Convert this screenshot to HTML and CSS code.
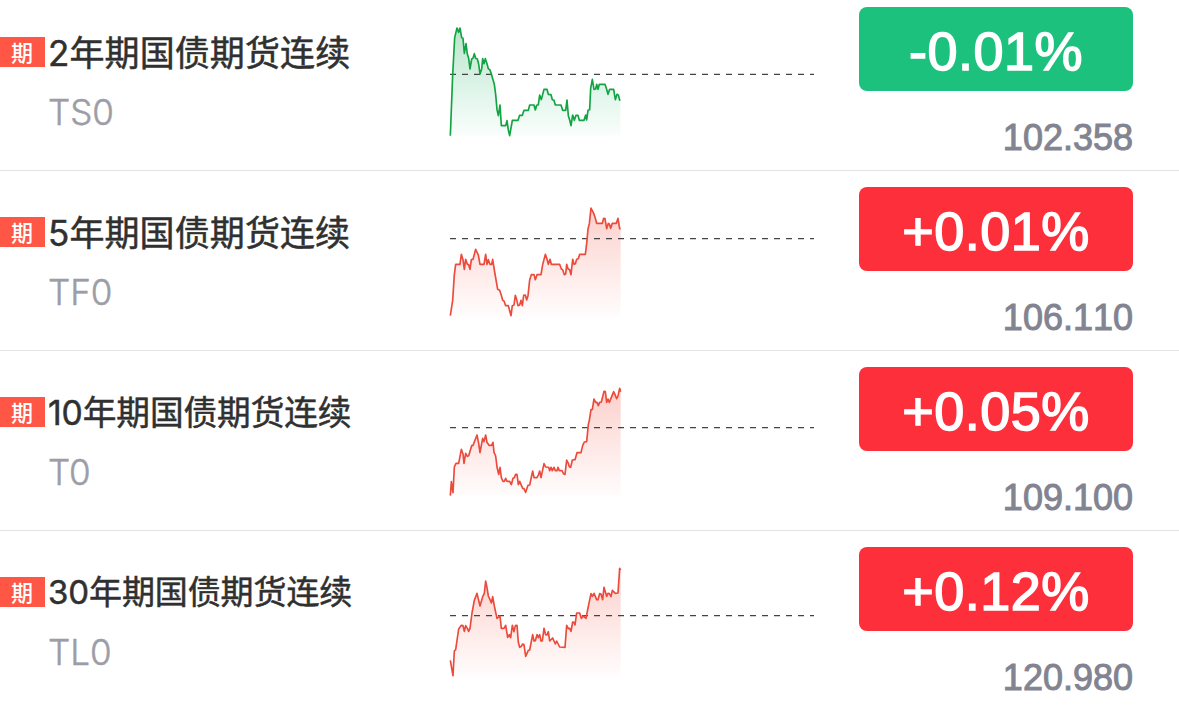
FILE: index.html
```
<!DOCTYPE html>
<html lang="zh-CN">
<head>
<meta charset="utf-8">
<title>国债期货</title>
<link rel="stylesheet" href="styles.css">
</head>
<body>
<svg class="defs" width="0" height="0">
  <defs>
    <linearGradient id="fall" gradientUnits="userSpaceOnUse" x1="0" y1="38" x2="0" y2="365"><stop offset="0" stop-color="#18a548" stop-opacity=".3"/><stop offset="1" stop-color="#18c070" stop-opacity=".02"/></linearGradient>
    <linearGradient id="rise" gradientUnits="userSpaceOnUse" x1="0" y1="38" x2="0" y2="370"><stop offset="0" stop-color="#f04a3a" stop-opacity=".27"/><stop offset="1" stop-color="#f85a4a" stop-opacity=".01"/></linearGradient>
  </defs>
</svg>
<main class="list">
  <section class="row">
    <span class="tag">期</span>
    <div class="info"><div class="name s35">2年期国债期货连续</div><div class="code">TS0</div></div>
    <svg class="chart down" viewBox="0 0 1140 390">
      <path class="area" d="M31 362L38 180L44 68L51 39L56 52L60 39L65 68L69 70L73 115L78 86L82 117L86 130L90 162L95 132L99 130L103 116L107 130L112 132L116 147L120 177L125 162L128 131L132 146L136 131L141 146L145 161L150 165L154 177L163 208L167 238L171 284L175 302L180 270L184 332L197 332L201 317L205 345L209 362L217 316L234 316L239 301L247 301L252 286L265 286L269 270L282 270L286 285L290 271L295 269L299 240L304 254L312 223L321 223L325 238L333 239L337 254L342 256L346 270L363 270L368 286L377 286L381 255L385 302L389 315L393 332L398 300L403 316L408 301L414 301L418 316L432 316L437 300L440 315L444 286L449 284L452 220L457 193L462 223L467 222L470 208L474 223L478 208L495 208L500 223L504 238L509 223L521 223L526 254L531 238L535 240L539 255L541 257V362Z"/>
      <path class="avg" d="M30 178H1122"/>
      <path class="line" d="M31 362L38 180L44 68L51 39L56 52L60 39L65 68L69 70L73 115L78 86L82 117L86 130L90 162L95 132L99 130L103 116L107 130L112 132L116 147L120 177L125 162L128 131L132 146L136 131L141 146L145 161L150 165L154 177L163 208L167 238L171 284L175 302L180 270L184 332L197 332L201 317L205 345L209 362L217 316L234 316L239 301L247 301L252 286L265 286L269 270L282 270L286 285L290 271L295 269L299 240L304 254L312 223L321 223L325 238L333 239L337 254L342 256L346 270L363 270L368 286L377 286L381 255L385 302L389 315L393 332L398 300L403 316L408 301L414 301L418 316L432 316L437 300L440 315L444 286L449 284L452 220L457 193L462 223L467 222L470 208L474 223L478 208L495 208L500 223L504 238L509 223L521 223L526 254L531 238L535 240L539 255L541 257"/>
    </svg>
    <div class="quote"><div class="change down">-0.01%</div><div class="price">102.358</div></div>
  </section>
  <section class="row">
    <span class="tag">期</span>
    <div class="info"><div class="name s35">5年期国债期货连续</div><div class="code">TF0</div></div>
    <svg class="chart" viewBox="0 0 1140 390">
      <path class="area" d="M31 362L38 316L43 239L47 208L60 208L64 178L69 194L73 223L77 193L82 208L86 209L90 223L94 194L99 193L107 163L115 180L120 208L132 208L137 178L141 208L145 194L150 208L155 208L158 193L163 225L173 283L179 286L184 301L188 316L192 318L197 332L205 332L213 362L217 332L222 330L226 301L230 314L234 332L239 330L243 316L247 332L251 301L256 300L260 315L264 302L269 255L274 239L282 239L286 254L291 239L303 239L308 209L316 178L321 192L325 208L330 193L334 208L359 208L364 222L368 224L373 239L377 237L380 208L384 221L389 224L393 239L398 193L402 208L406 206L410 193L415 191L419 178L436 178L440 146L444 102L448 86L453 39L461 55L466 70L470 85L487 85L491 70L495 71L500 101L505 85L508 87L512 100L517 85L529 85L534 70L539 101L542 101V365H31Z"/>
      <path class="avg" d="M30 131H1122"/>
      <path class="line" d="M31 362L38 316L43 239L47 208L60 208L64 178L69 194L73 223L77 193L82 208L86 209L90 223L94 194L99 193L107 163L115 180L120 208L132 208L137 178L141 208L145 194L150 208L155 208L158 193L163 225L173 283L179 286L184 301L188 316L192 318L197 332L205 332L213 362L217 332L222 330L226 301L230 314L234 332L239 330L243 316L247 332L251 301L256 300L260 315L264 302L269 255L274 239L282 239L286 254L291 239L303 239L308 209L316 178L321 192L325 208L330 193L334 208L359 208L364 222L368 224L373 239L377 237L380 208L384 221L389 224L393 239L398 193L402 208L406 206L410 193L415 191L419 178L436 178L440 146L444 102L448 86L453 39L461 55L466 70L470 85L487 85L491 70L495 71L500 101L505 85L508 87L512 100L517 85L529 85L534 70L539 101L542 101"/>
    </svg>
    <div class="quote"><div class="change">+0.01%</div><div class="price">106.110</div></div>
  </section>
  <section class="row">
    <span class="tag">期</span>
    <div class="info"><div class="name s34">10年期国债期货连续</div><div class="code">T0</div></div>
    <svg class="chart" viewBox="0 0 1140 390">
      <path class="area" d="M31 362L34 320L39 353L43 276L48 265L56 265L64 223L69 237L72 265L77 235L82 244L86 242L95 212L99 211L111 180L116 205L120 233L128 190L132 200L137 180L141 202L147 211L155 211L159 202L162 232L167 243L171 276L176 298L180 277L184 308L189 319L193 319L197 310L201 319L209 319L214 329L219 310L223 308L227 298L231 298L235 329L239 319L248 340L252 341L257 352L264 331L269 330L278 288L282 308L291 308L295 300L299 288L303 308L312 266L317 276L326 277L329 287L333 277L337 287L342 277L346 287L351 287L354 277L358 287L366 287L371 297L375 298L380 255L385 265L388 275L392 277L397 255L405 254L411 233L423 233L428 212L433 201L440 200L445 148L448 136L453 104L457 103L462 72L467 82L471 82L475 92L479 82L484 81L492 49L496 50L500 82L504 72L508 82L521 50L530 71L534 63L539 40L542 50V362Z"/>
      <path class="avg" d="M30 158H1122"/>
      <path class="line" d="M31 362L34 320L39 353L43 276L48 265L56 265L64 223L69 237L72 265L77 235L82 244L86 242L95 212L99 211L111 180L116 205L120 233L128 190L132 200L137 180L141 202L147 211L155 211L159 202L162 232L167 243L171 276L176 298L180 277L184 308L189 319L193 319L197 310L201 319L209 319L214 329L219 310L223 308L227 298L231 298L235 329L239 319L248 340L252 341L257 352L264 331L269 330L278 288L282 308L291 308L295 300L299 288L303 308L312 266L317 276L326 277L329 287L333 277L337 287L342 277L346 287L351 287L354 277L358 287L366 287L371 297L375 298L380 255L385 265L388 275L392 277L397 255L405 254L411 233L423 233L428 212L433 201L440 200L445 148L448 136L453 104L457 103L462 72L467 82L471 82L475 92L479 82L484 81L492 49L496 50L500 82L504 72L508 82L521 50L530 71L534 63L539 40L542 50"/>
    </svg>
    <div class="quote"><div class="change">+0.05%</div><div class="price">109.100</div></div>
  </section>
  <section class="row">
    <span class="tag">期</span>
    <div class="info"><div class="name s33">30年期国债期货连续</div><div class="code">TL0</div></div>
    <svg class="chart" viewBox="0 0 1140 390">
      <path class="area" d="M31 316L39 362L43 288L47 284L56 222L64 211L69 212L73 229L77 212L82 220L86 229L90 220L96 174L103 136L111 115L120 153L128 125L133 115L137 78L141 98L145 123L150 134L154 144L158 125L163 153L171 190L180 183L184 220L192 220L197 211L203 247L208 239L212 248L217 211L222 230L226 212L231 211L235 262L239 277L244 274L248 267L252 269L257 304L265 286L269 285L278 239L282 258L286 257L291 239L295 248L299 239L303 258L307 258L312 220L317 239L321 240L325 230L329 258L338 249L342 258L346 267L350 258L359 276L375 277L380 211L385 221L389 220L393 229L398 201L402 202L405 210L410 174L419 174L424 190L430 183L438 190L445 154L453 116L457 124L462 115L470 134L474 134L479 116L483 117L488 134L492 97L500 124L504 115L508 116L513 125L517 106L526 115L534 114L539 40L542 45V365H31Z"/>
      <path class="avg" d="M30 182H1122"/>
      <path class="line" d="M31 316L39 362L43 288L47 284L56 222L64 211L69 212L73 229L77 212L82 220L86 229L90 220L96 174L103 136L111 115L120 153L128 125L133 115L137 78L141 98L145 123L150 134L154 144L158 125L163 153L171 190L180 183L184 220L192 220L197 211L203 247L208 239L212 248L217 211L222 230L226 212L231 211L235 262L239 277L244 274L248 267L252 269L257 304L265 286L269 285L278 239L282 258L286 257L291 239L295 248L299 239L303 258L307 258L312 220L317 239L321 240L325 230L329 258L338 249L342 258L346 267L350 258L359 276L375 277L380 211L385 221L389 220L393 229L398 201L402 202L405 210L410 174L419 174L424 190L430 183L438 190L445 154L453 116L457 124L462 115L470 134L474 134L479 116L483 117L488 134L492 97L500 124L504 115L508 116L513 125L517 106L526 115L534 114L539 40L542 45"/>
    </svg>
    <div class="quote"><div class="change">+0.12%</div><div class="price">120.980</div></div>
  </section>
</main>
</body>
</html>
```
FILE: styles.css
```
* { box-sizing: border-box; }
body { margin: 0; background: #fff; overflow: hidden; }
.defs { display: block; }
.list { height: 705px; overflow: hidden; }
.row {
  display: grid;
  grid-template-columns: 45px 395px 380px 313px;
  height: 180px;
  border-bottom: 1px solid #e3e3e3;
}
.row:first-child { margin-top: -9px; }
.row:last-child { border-bottom: 0; }
.tag {
  height: 30px;
  margin-top: 46px;
  padding-right: 1px;
  background: #ff5645;
  color: #fff;
  font: 500 22px/28px "Noto Sans CJK SC", sans-serif;
  text-align: center;
}
.info { padding: 38px 0 0 3px; }
.name {
  height: 50px;
  color: #303030;
  font-family: Inter, "Noto Sans CJK SC", sans-serif;
  font-weight: 400;
  line-height: 49px;
  white-space: nowrap;
  -webkit-text-stroke: .5px #303030;
}
.s35 { font-size: 35px; letter-spacing: .1px; }
.s34 { font-size: 33.7px; letter-spacing: -.1px; line-height: 48px; }
.s33 { font-size: 33px; letter-spacing: -.1px; line-height: 47px; }
.code {
  margin-top: 9px;
  color: #9c9da6;
  font: 300 35px/49px Inter, sans-serif;
  -webkit-text-stroke: .5px #9c9da6;
}
.chart { width: 380px; height: 130px; margin-top: 24px; }
.area { fill: url(#rise); }
.line { fill: none; stroke: #ec4b3c; stroke-width: 5; stroke-linejoin: round; }
.down .area { fill: url(#fall); }
.down .line { stroke: #12a443; }
.avg { stroke: #444; stroke-width: 4; stroke-dasharray: 18 18; }
.quote {
  display: flex;
  flex-direction: column;
  align-items: flex-end;
  padding-top: 16px;
  font-family: "Liberation Sans", sans-serif;
  font-kerning: none;
}
.change {
  width: 274px;
  height: 84px;
  border-radius: 8px;
  background: #fc2f3b;
  color: #fff;
  font-size: 54px;
  letter-spacing: .5px;
  line-height: 88px;
  text-align: center;
  -webkit-text-stroke: 1.5px #fff;
}
.change.down { background: #1dc17e; }
.price {
  margin-top: 26px;
  color: #828491;
  font-size: 36px;
  line-height: 41px;
  -webkit-text-stroke: 1px #828491;
}
```
